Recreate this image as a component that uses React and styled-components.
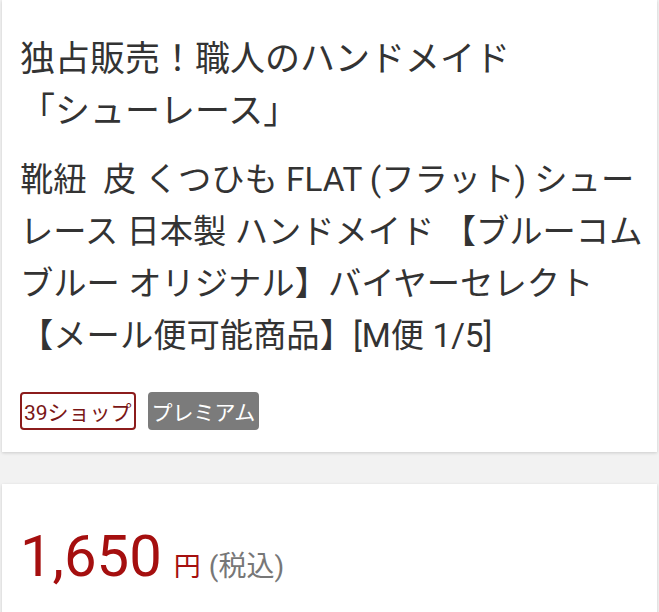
import styled, { createGlobalStyle } from "styled-components";

const GlobalStyle = createGlobalStyle`
  body {
    margin: 0;
    background: #f2f2f2;
    font-family: Roboto, "Noto Sans CJK JP", sans-serif;
    color: #333;
  }
`;

const Page = styled.div`
  display: flex;
  flex-direction: column;
  gap: 32px;
  padding: 0 2px;
`;

const Card = styled.section`
  background: #fff;
  box-shadow: 0 1px 3px rgba(0, 0, 0, 0.16);
  padding: ${(p) => p.$pad};
`;

const Title = styled.h1`
  margin: 0 0 16px;
  font-size: 35px;
  font-weight: 400;
  line-height: 52px;
  color: #333;
`;

const Description = styled.p`
  margin: 0;
  font-size: 33.3px;
  line-height: 52px;
  color: #333;
  white-space: pre;
`;

const Tags = styled.div`
  display: flex;
  gap: 12px;
  margin-top: 30px;
`;

const Tag = styled.span`
  display: inline-flex;
  align-items: center;
  height: 38px;
  box-sizing: border-box;
  padding: 0 2px;
  border-radius: 4px;
  font-size: 21px;
  border: 2px solid ${(p) => (p.$shop ? "#8c1c1c" : "#7b7b7b")};
  background: ${(p) => (p.$shop ? "#fff" : "#7b7b7b")};
  color: ${(p) => (p.$shop ? "#7a1616" : "#fff")};
`;

const PriceRow = styled.div`
  display: flex;
  align-items: baseline;
  line-height: 70px;
`;

const Amount = styled.span`
  font-size: 58px;
  color: #a50f0f;
  margin-right: 12px;
`;

const Yen = styled.span`
  font-size: 27px;
  color: #a50f0f;
  margin-right: 8px;
`;

const Tax = styled.span`
  font-size: 28px;
  color: #777;
`;

export default function App() {
  return (
    <>
      <GlobalStyle />
      <Page>
        <Card $pad="34px 18px 22px">
          <Title>
            独占販売！職人のハンドメイド
            <br />
            「シューレース」
          </Title>
          <Description>
            {"靴紐  皮 くつひも FLAT (フラット) シュー\nレース 日本製 ハンドメイド 【ブルーコム\nブルー オリジナル】バイヤーセレクト\n【メール便可能商品】[M便 1/5]"}
          </Description>
          <Tags>
            <Tag $shop>39ショップ</Tag>
            <Tag>プレミアム</Tag>
          </Tags>
        </Card>
        <Card $pad="37px 18px 40px">
          <PriceRow>
            <Amount>1,650</Amount>
            <Yen>円</Yen>
            <Tax>(税込)</Tax>
          </PriceRow>
        </Card>
      </Page>
    </>
  );
}
